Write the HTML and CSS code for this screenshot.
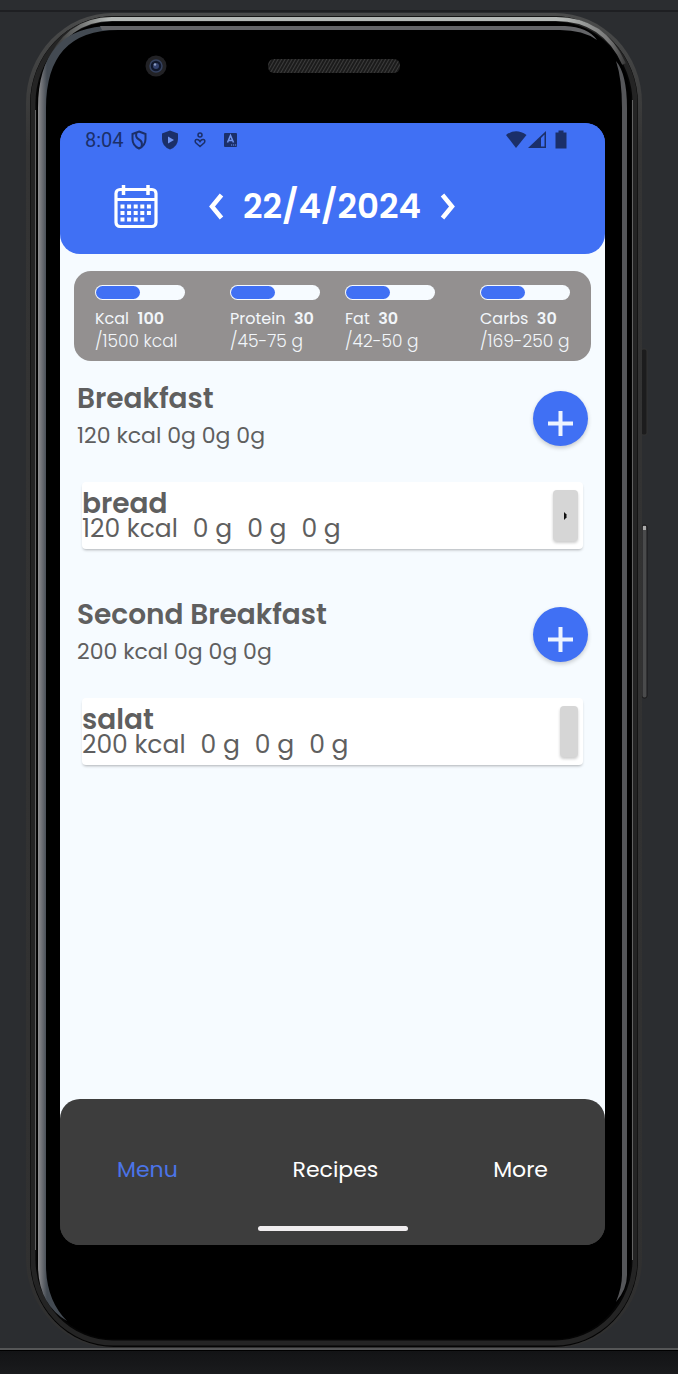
FILE: index.html
```
<!DOCTYPE html>
<html lang="en">
<head>
<meta charset="utf-8">
<meta name="viewport" content="width=device-width, initial-scale=1">
<title>Meal diary</title>
<link rel="stylesheet" href="styles.css">
</head>
<body>
<div class="stage">
  <svg class="bezel" viewBox="0 0 678 1374" preserveAspectRatio="none" aria-hidden="true">
    <defs>
      <linearGradient id="rim" x1="0" y1="0" x2="0" y2="1">
        <stop offset="0" stop-color="#4a4b4b"/><stop offset=".1" stop-color="#343434"/><stop offset="1" stop-color="#303030"/>
      </linearGradient>
      <linearGradient id="top" gradientUnits="userSpaceOnUse" x1="50" y1="0" x2="632" y2="0">
        <stop offset="0" stop-color="#2a2a2a"/><stop offset=".1" stop-color="#b4b8b6"/><stop offset=".88" stop-color="#b4b8b6"/><stop offset=".96" stop-color="#777"/><stop offset="1" stop-color="#222"/>
      </linearGradient>
      <linearGradient id="side" gradientUnits="userSpaceOnUse" x1="38" y1="0" x2="47" y2="0">
        <stop offset="0" stop-color="#8e8e8f"/><stop offset=".4" stop-color="#707277"/><stop offset="1" stop-color="#434a52"/>
      </linearGradient>
      <linearGradient id="foot" x1="0" y1="0" x2="0" y2="1">
        <stop offset="0" stop-color="#121315"/><stop offset="1" stop-color="#1a1b1d"/>
      </linearGradient>
      <pattern id="mesh" width="3" height="3" patternUnits="userSpaceOnUse" patternTransform="rotate(30)">
        <rect width="3" height="3" fill="#1b1b1b"/><rect width="1" height="3" fill="#3c3c3c"/>
      </pattern>
    </defs>
    <rect width="678" height="1374" fill="#2b2d30"/>
    <rect y="10" width="678" height="2" fill="#1e1f22"/>
    <rect y="1350" width="678" height="24" fill="url(#foot)"/>
    <rect y="1348" width="678" height="2" fill="#555657"/>
    <rect y="1350" width="678" height="1" fill="#000"/>
    <rect x="641" y="349" width="6" height="86" rx="2" fill="#1c1c1d" stroke="#333"/>
    <rect x="642" y="525" width="5" height="173" rx="2" fill="#4a4b4c" stroke="#19191a"/>
    <rect x="643" y="526" width="3" height="4" fill="#aaa"/>
    <rect x="26" y="13" width="616" height="1335" rx="87" ry="90" fill="url(#rim)"/>
    <rect x="30" y="16" width="608" height="1331" rx="84" ry="88" fill="#050505"/>
    <rect x="33" y="19" width="602" height="1324" rx="80" ry="84" fill="none" stroke="#242424" stroke-width="5"/>
    <path d="M46 68Q66 19 112 19H556Q604 19 624 64" fill="none" stroke="url(#top)" stroke-width="4"/>
    <path d="M35.500 110V1250M632.500 100V1260" fill="none" stroke="#626262"/>
    <rect x="37" y="22" width="594" height="1317" rx="76" ry="82" fill="#000"/>
    <path d="M38 108Q38 26 112 26H118V30Q46 30 46 108V1265Q46 1300 67 1321Q38 1304 38 1265Z" fill="url(#side)"/>
    <path d="M100 26H565Q588 27 597 40Q583 30 560 30H102Z" fill="#646568"/>
    <path d="M616 61Q627 74 627 108V1275Q627 1289 616 1302Q622 1287 622 1275V108Q622 79 616 61Z" fill="#555659"/>
    <rect x="268" y="59" width="132" height="14" rx="6" fill="url(#mesh)"/>
    <circle cx="156" cy="66" r="10.500" fill="#222225"/>
    <circle cx="156" cy="66" r="6" fill="#10172b" stroke="#34415f" stroke-width="1.500"/>
    <circle cx="156" cy="66" r="3" fill="#33426f"/><circle cx="155" cy="64.500" r="1.200" fill="#8d9cc0"/>
  </svg>

  <main class="screen">
    <header class="header">
      <div class="status">
        <time>8:04</time>
        <svg width="16" height="20" viewBox="0 0 16 20"><path d="M8 1.500L14.500 4V9Q14.500 15.500 8 18.500Q1.500 15.500 1.500 9V4Z" fill="none" stroke="currentColor" stroke-width="2"/><path d="M5.500 3Q4 7.500 8 9.500T10.500 16.500" fill="none" stroke="currentColor" stroke-width="2"/></svg>
        <svg width="16" height="20" viewBox="0 0 16 20"><path d="M8 .5L16 3.500V9Q16 16.500 8 19.500Q0 16.500 0 9V3.500Z" fill="currentColor"/><path d="M6 6.500V13.500L12 10Z" fill="#6f93f0"/></svg>
        <svg width="16" height="16" viewBox="0 0 16 16"><circle cx="7" cy="3" r="2" fill="none" stroke="currentColor" stroke-width="1.500"/><path d="M7 14.500L2.500 10.500Q1.500 8 3.500 7.500Q5.500 7 7 9.500Q8.500 7 10.500 7.500Q12.500 8 11.500 10.500Z" fill="none" stroke="currentColor" stroke-width="1.500"/></svg>
        <svg width="14" height="16" viewBox="0 0 14 16"><rect y="1" width="13" height="14" rx="1" fill="currentColor"/><path d="M3.500 10.500L6.500 3.500L9.500 10.500M4.600 8.500H8.400" fill="none" stroke="#6f93f0" stroke-width="1.500"/><path d="M7 13h1.200M9 13h1.200M11 13h1.200" stroke="#6f93f0"/></svg>
        <svg class="radio" width="62" height="20" viewBox="0 0 62 20"><path d="M0 5Q10-2.500 20.500 5L10 18Z" fill="currentColor"/><path d="M22 18L40 1V18Z" fill="currentColor"/><path d="M35 8L38.500 4.500V16.500H35Z" fill="#4070f4"/><path d="M49.500 2.500H52.500V.5H57.500V2.500H60.500V18.500H49.500Z" fill="currentColor"/></svg>
      </div>
      <div class="datebar">
        <button class="icon" type="button" aria-label="Open calendar">
          <svg width="44" height="44" viewBox="0 0 44 44"><rect x="2" y="4.500" width="40" height="37" rx="4" fill="none" stroke="#fff" stroke-width="3.200"/><path d="M2 14.500H42" stroke="#fff" stroke-width="3"/><path d="M9.500 0V10M34 0V10" stroke="#fff" stroke-width="3.500"/><path d="M6.500 21.500H37M6.500 28H37" stroke="#fff" stroke-width="4" stroke-dasharray="4 2.600"/><path d="M6.500 34.500H30.500" stroke="#fff" stroke-width="4" stroke-dasharray="4 2.600"/></svg>
        </button>
        <div class="picker">
          <button class="icon" type="button" aria-label="Previous day"><svg width="16" height="27" viewBox="0 0 16 27"><path d="M13.500 2L4 13.500L13.500 25" fill="none" stroke="#fff" stroke-width="4.500"/></svg></button>
          <h1>22/4/2024</h1>
          <button class="icon" type="button" aria-label="Next day"><svg width="16" height="27" viewBox="0 0 16 27"><path d="M2.500 2L12 13.500L2.500 25" fill="none" stroke="#fff" stroke-width="4.500"/></svg></button>
        </div>
      </div>
    </header>

    <section class="goals" aria-label="Daily goals">
      <div class="goal"><div class="bar"><div class="fill"></div></div><p>Kcal&nbsp; <b>100</b></p><p class="range">/1500 kcal</p></div>
      <div class="goal"><div class="bar"><div class="fill"></div></div><p>Protein&nbsp; <b>30</b></p><p class="range">/45-75 g</p></div>
      <div class="goal"><div class="bar"><div class="fill"></div></div><p>Fat&nbsp; <b>30</b></p><p class="range">/42-50 g</p></div>
      <div class="goal"><div class="bar"><div class="fill"></div></div><p>Carbs&nbsp; <b>30</b></p><p class="range">/169-250 g</p></div>
    </section>

    <section class="meal">
      <div class="meal-head">
        <div><h2>Breakfast</h2><p>120 kcal 0g 0g 0g</p></div>
        <button class="add" type="button" aria-label="Add to Breakfast"><svg width="25" height="25" viewBox="0 0 25 25"><path d="M12.500 0V25M0 12.500H25" stroke="#edf4ff" stroke-width="4"/></svg></button>
      </div>
      <article class="entry">
        <div><h3>bread</h3><p><span>120 kcal</span><span>0 g</span><span>0 g</span><span>0 g</span></p></div>
        <button class="remove wide" type="button" aria-label="Options for bread"><svg width="3" height="8" viewBox="0 0 3 8"><path d="M0 0L2.500 2.500V5.500L0 8Z" fill="#111"/></svg></button>
      </article>
    </section>

    <section class="meal">
      <div class="meal-head">
        <div><h2>Second Breakfast</h2><p>200 kcal 0g 0g 0g</p></div>
        <button class="add" type="button" aria-label="Add to Second Breakfast"><svg width="25" height="25" viewBox="0 0 25 25"><path d="M12.500 0V25M0 12.500H25" stroke="#edf4ff" stroke-width="4"/></svg></button>
      </div>
      <article class="entry">
        <div><h3>salat</h3><p><span>200 kcal</span><span>0 g</span><span>0 g</span><span>0 g</span></p></div>
        <button class="remove" type="button" aria-label="Options for salat"></button>
      </article>
    </section>

    <footer class="tabs">
      <nav>
        <a class="active" href="#menu">Menu</a>
        <a href="#recipes">Recipes</a>
        <a href="#more">More</a>
      </nav>
      <div class="home"></div>
    </footer>
  </main>
</div>
</body>
</html>
```
FILE: styles.css
```
* { box-sizing: border-box; }
body {
  margin: 0;
  background: #2b2d30;
  font-family: Poppins, Inter, "Open Sans", sans-serif;
  color: #5f5f5f;
}
h1, h2, h3, p { margin: 0; font-weight: 400; }
button { border: 0; padding: 0; cursor: pointer; }
svg { display: block; }

.stage {
  position: relative;
  display: flex;
  min-height: 100vh;
  padding: 123px 73px 129px 60px;
}
.bezel { position: absolute; inset: 0; width: 100%; height: 100%; }

.screen {
  position: relative;
  display: flex;
  flex: 1;
  flex-direction: column;
  overflow: hidden;
  border-radius: 20px;
  background: linear-gradient(#4070f4 60px, #f6fbff 60px, #f6fbff calc(100% - 60px), #3d3d3d calc(100% - 60px));
}

.header {
  padding-bottom: 22px;
  border-radius: 0 0 20px 20px;
  background: #4070f4;
}
.status {
  display: flex;
  align-items: center;
  gap: 15px;
  height: 34px;
  padding: 0 37px 0 25px;
  color: #1b2f69;
}
.status time { margin-right: -8px; font: 20px/24px Roboto, sans-serif; }
.radio { margin-left: auto; }
.datebar { display: flex; align-items: center; gap: 50px; margin-top: 24px; padding-left: 54px; }
.icon { display: block; background: none; }
.picker { display: flex; align-items: center; gap: 19px; }
.picker h1 { color: #fff; font-size: 34px; line-height: 51px; font-weight: 600; }

.goals {
  display: grid;
  grid-template-columns: 135fr 115fr 135fr 90fr;
  margin: 17px 14px 0;
  padding: 14px 21px 9px;
  border-radius: 17px;
  background: #939090;
  color: #f2f6fa;
  font-size: 16px;
  line-height: 22px;
  white-space: nowrap;
}
.goal b { font-weight: 600; }
.goal .range { font-size: 17px; font-weight: 300; }
.bar { width: 90px; height: 15px; margin-bottom: 8px; padding: 1px; border-radius: 8px; background: #f6fbff; }
.fill { width: 50%; height: 100%; border-radius: 7px; background: #4070f4; }

.meal { margin: 20px 17px 28px; }
.meal-head { display: flex; align-items: flex-start; justify-content: space-between; }
.meal-head h2 { font-size: 28px; line-height: 36px; font-weight: 600; }
.meal-head p { font-size: 22px; line-height: 38px; }
.add {
  display: flex;
  align-items: center;
  justify-content: center;
  width: 55px;
  height: 55px;
  margin-top: 10px;
  padding-top: 10px;
  border-radius: 50%;
  background: #4070f4;
  box-shadow: 0 2px 4px rgba(0, 0, 0, .2);
}
.entry {
  display: flex;
  justify-content: space-between;
  margin: 27px 5px 0;
  padding: 8px 5px 8px 0;
  border-radius: 4px;
  background: #fff;
  box-shadow: 0 2px 3px -1px rgba(0, 0, 0, .3);
}
.entry h3 { margin-top: 2px; font-size: 28px; line-height: 24px; font-weight: 600; }
.entry p { display: flex; gap: 15px; font-size: 25px; line-height: 25px; }
.remove {
  display: flex;
  align-items: center;
  justify-content: center;
  width: 18px;
  border-radius: 4px;
  background: #d6d6d6;
  box-shadow: 0 2px 3px rgba(0, 0, 0, .2);
}
.wide { width: 25px; }

.tabs { margin-top: auto; padding: 54px 57px 14px; border-radius: 20px 20px 0 0; background: #3d3d3d; }
.tabs nav { display: flex; justify-content: space-between; }
.tabs a { color: #fff; font-size: 22px; line-height: 34px; text-decoration: none; }
.tabs .active { color: #4b74e8; }
.home { width: 150px; height: 5px; margin: 39px auto 0; border-radius: 3px; background: #f0edef; }
```
